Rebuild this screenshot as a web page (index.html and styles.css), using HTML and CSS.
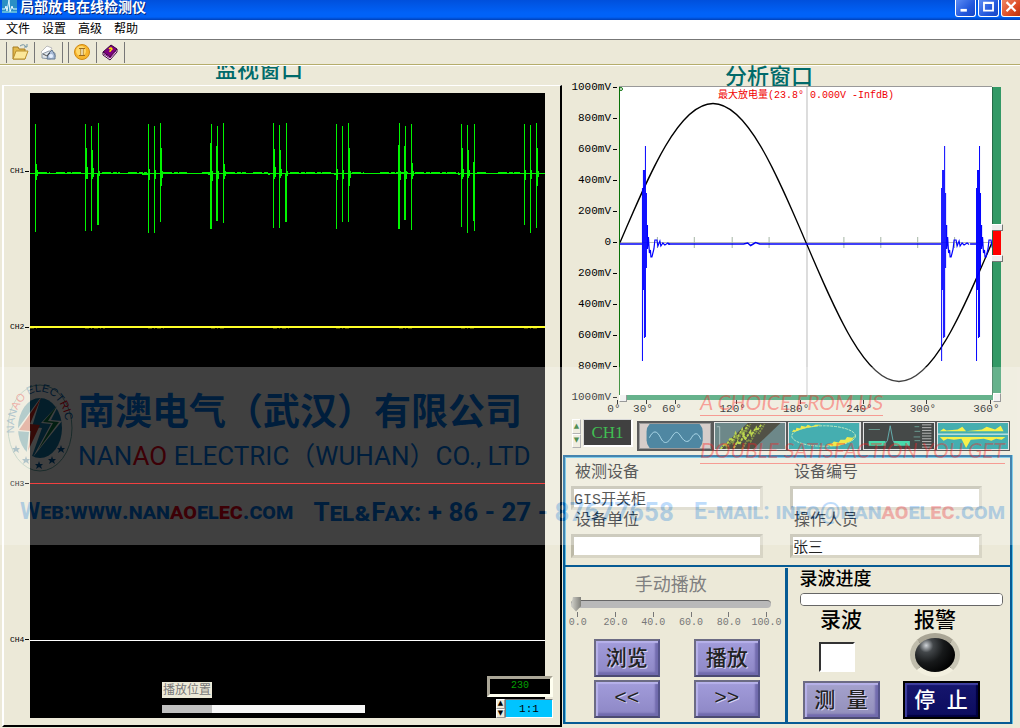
FILE: index.html
```html
<!DOCTYPE html>
<html lang="zh-CN">
<head>
<meta charset="utf-8">
<title>局部放电在线检测仪</title>
<link rel="stylesheet" href="styles.css">
</head>
<body>
<header class="titlebar">
  <svg class="app-icon" viewBox="0 0 15 13"><rect width="15" height="13" fill="#2b8fc4"/><path d="M0 9h3l1-3 1 5 2-11 1 12 2-6 1 3h4" fill="none" stroke="#e4f8ff"/><path d="M0 12h15" stroke="#8fe0f5"/></svg>
  <h1 class="app-title">局部放电在线检测仪</h1>
  <div class="window-buttons">
    <button class="win-btn" aria-label="最小化"><svg viewBox="0 0 21 17"><path d="M5 11h7" stroke="#fff" stroke-width="3"/></svg></button>
    <button class="win-btn" aria-label="最大化"><svg viewBox="0 0 21 17"><path d="M5.500 2.500h10v9h-10zM5 3h11" fill="none" stroke="#fff" stroke-width="2"/></svg></button>
    <button class="win-btn win-close" aria-label="关闭"><svg viewBox="0 0 21 17"><path d="M5 2l10 10M15 2L5 12" stroke="#fff" stroke-width="2.400"/></svg></button>
  </div>
</header>
<nav class="menubar">
  <button class="menu-item">文件</button>
  <button class="menu-item">设置</button>
  <button class="menu-item">高级</button>
  <button class="menu-item">帮助</button>
</nav>
<div class="toolbar">
  <button class="tool" aria-label="打开"><svg viewBox="0 0 20 20"><path d="M3 5h5l1 2h6v10H3z" fill="#e2b94c" stroke="#a77d23"/><path d="M3 17l3-8h12l-3 8z" fill="#fce79a" stroke="#b98e2d"/><path d="M10 4q4-3 6 1M14 5h3V2" fill="none" stroke="#6f93a3"/></svg></button>
  <button class="tool" aria-label="打印"><svg viewBox="0 0 20 20"><path d="M3 10l6-6 5 2-2 3-6 5z" fill="#fff" stroke="#bbb"/><path d="M4 12l7-3 6 2v4l-5 2-8-1z" fill="#dfe4e9" stroke="#8d99a6"/><path d="M9 17l1-5 4-4 3 5v4z" fill="#a9bbd6" stroke="#647891"/><path d="M5 12l4 2 3-3" fill="none" stroke="#555"/><circle cx="13" cy="14" r="2" fill="#e5efff"/></svg></button>
  <button class="tool tool-group" aria-label="暂停"><svg viewBox="0 0 20 20"><circle cx="10" cy="10" r="7.500" fill="#f7b52d" stroke="#d08a12"/><circle cx="9" cy="9" r="5" fill="#ffd96b"/><path d="M7 6.500h6M7 13.500h6M9 6v8M11 6v8" stroke="#9a6b1e"/><path d="M10 7v6" stroke="#fff"/></svg></button>
  <button class="tool" aria-label="帮助"><svg viewBox="0 0 20 20"><path d="M3 10l8-7 6 4-7 8z" fill="#800080" stroke="#3d003d"/><path d="M3 10l7 5 7-8v3l-7 8-7-5z" fill="#fff" stroke="#3d003d"/><path d="M4 12l6 4 6-7" fill="none" stroke="#800080"/><path d="M9 7q2-2 3 0l-2 2v1" fill="none" stroke="#ffe500" stroke-width="1.400"/></svg></button>
</div>

<main class="workspace">
  <section class="monitor">
    <div class="monitor-head"><h2 class="pane-title">监视窗口</h2></div>
    <div class="monitor-frame">
      <div class="channel-labels"><span>CH1</span><span>CH2</span><span>CH3</span><span>CH4</span></div>
      <div class="scope">
        <svg class="traces" viewBox="0 0 515 625" preserveAspectRatio="none">
          <g fill="none" stroke="#00f500">
            <path d="M0 80.500H515"/>
            <path d="M8 79.500h12M26 79.500h26M72 79.500h18M98 79.500h19M133 79.500h24M172 79.500h8M196 79.500h20M223 79.500h15M260 79.500h43M322 79.500h12M350 79.500h28M385 79.500h44M447 79.500h10M468 79.500h22M112 81.500h6M178 81.500h3M238 81.500h2M304 81.500h3M428 81.500h2" stroke-dasharray="9 2 4 1"/>
            <path d="M5.500 31V139M55.500 31V138M61.500 33V138M68.500 30V132M118.500 31V140M124.500 33V140M130.500 30V129M181.500 31V136M187.500 33V128M193.500 30V130M243.500 30V135M249.500 32V135M256.500 30V129M306.500 31V136M312.500 33V129M318.500 30V129M369.500 30V136M375.500 33V127M381.500 31V137M431.500 31V134M437.500 32V140M444.500 31V138M494.500 31V132M500.500 32V140M506.500 30V135"/>
            <path d="M6.500 71V87M56.500 55V86M62.500 57V86M67.500 80V132M119.500 76V87M125.500 77V86M131.500 55V93M180.500 50V136M186.500 53V128M194.500 71V86M244.500 56V86M250.500 57V85M255.500 80V129M307.500 76V87M313.500 77V86M319.500 55V93M368.500 52V136M374.500 53V127M382.500 70V86M432.500 55V86M438.500 57V85M443.500 69V128M495.500 77V87M501.500 77V86M507.500 55V93"/>
            <path d="M7.500 77V83M57.500 74V86M63.500 75V84M69.500 78V83M132.500 78V85M182.500 78V88M188.500 78V86M195.500 78V83M245.500 74V84M251.500 76V83M257.500 78V83M320.500 78V85M370.500 78V87M376.500 78V86M383.500 78V83M433.500 76V84M439.500 77V83M508.500 78V84"/>
          </g>
          <path d="M0 234h515" stroke="#ffff28" stroke-width="2"/>
          <path d="M0 235.500h8M55 235.500h20M118 235.500h16M181 235.500h13M243 235.500h16M306 235.500h15M369 235.500h14M431 235.500h15M494 235.500h15" stroke="#4b4b00" stroke-dasharray="4 2 1 2"/>
          <path d="M0 390.500h515" stroke="#f00000"/>
          <path d="M0 547.500h515" stroke="#fff"/>
        </svg>
        <div class="position">
          <label class="position-label" for="playpos">播放位置</label>
          <progress class="position-bar" id="playpos" value="50" max="203"></progress>
        </div>
        <div class="readouts">
          <output class="count">230</output>
          <div class="scale">
            <span class="spin"><button aria-label="增大">▲</button><button aria-label="减小">▼</button></span>
            <input class="scale-value" value="1:1" aria-label="比例">
          </div>
        </div>
      </div>
    </div>
  </section>

  <section class="analysis">
    <h2 class="pane-title">分析窗口</h2>
    <div class="chart">
      <div class="y-axis"><span>1000mV</span><span>800mV</span><span>600mV</span><span>400mV</span><span>200mV</span><span>0</span><span>200mV</span><span>400mV</span><span>600mV</span><span>800mV</span><span>1000mV</span></div>
      <div class="plot">
        <svg class="curves" viewBox="0 0 373 308" preserveAspectRatio="none">
          <defs>
            <g id="pulse" fill="none" stroke="#0000ff">
              <g class="crisp"><path d="M3.500 59V250M.500 101V274M1.500 83V203M2.500 83V251M4.500 106V181"/></g>
              <path d="M5.500 138V162L6.500 150L7.500 166L8.500 163L9 170H10L12 162L13 153H15L16 159L18 154L19 159L21 156L23 158L26 156L28 157.500" stroke-width="1.200"/>
            </g>
          </defs>
          <g class="crisp">
            <path d="M187.500 0V308M0 155.500H373" stroke="#bababa"/>
            <path d="M37.500 150v11M74.500 150v11M112.500 150v11M149.500 150v11M224.500 150v11M261.500 150v11M298.500 150v11M335.500 150v11" stroke="#a5b5a5"/>
          </g>
          <path d="M0 155.500C30.400 84.500 59.500 16.500 93.250 16.500S156.100 84.500 186.500 155.500S246 294.500 279.750 294.500S342.600 226.500 373 155.500" fill="none" stroke="#000" stroke-width="1.300"/>
          <path d="M0 157H22M48 157H124L128 156L131 158.500L136 155.500L140 157H322M351 157H357" fill="none" stroke="#0000f5" stroke-width="1.500"/>
          <use href="#pulse" x="22"/><use href="#pulse" x="322"/><use href="#pulse" x="357"/>
          <circle cx="1" cy="2" r="1.500" fill="none" stroke="#087008"/>
        </svg>
        <p class="peak-note">最大放电量(23.8° 0.000V -InfdB)</p>
      </div>
      <div class="v-range"><i class="grip"></i><i class="grip"></i></div>
      <div class="h-range"><i class="grip"></i><i class="grip"></i></div>
      <div class="x-axis"><span>0°</span><span>30°</span><span>60°</span><span>120°</span><span>180°</span><span>240°</span><span>300°</span><span>360°</span></div>
    </div>

    <div class="selector">
      <span class="ch-spin"><button aria-label="上一通道">▲</button><button aria-label="下一通道">▼</button></span>
      <input class="channel" value="CH1" aria-label="通道">
      <div class="views">
        <button class="view active" aria-label="波形"><svg viewBox="0 0 75 28" preserveAspectRatio="none"><rect width="75" height="28" fill="#c9bdb9"/><rect x="7" y="-5" width="60" height="38" rx="14" fill="#145f83"/><path d="M10 16c4-9 8-9 12 0s8 6 12-1 6-7 10 0 8 7 11 1 7-7 10 2" fill="none" stroke="#9bd4ea"/></svg></button>
        <button class="view" aria-label="三维"><svg viewBox="0 0 75 28" preserveAspectRatio="none"><rect width="75" height="28" fill="#3c6062"/><path d="M5 28L35 0H70L41 28z" fill="#171708"/><g fill="none"><path d="M6 28l5-6 1 2 5-8 2 4 3-9 2 5 5-9 1 5 5-10M20 27l4-7 2 3 5-10 1 5 6-9 1 4 5-8 1 3 5-7" stroke="#a5c914" stroke-width="2" stroke-dasharray="3 1"/><path d="M12 28l5-8 2 2 4-8 2 3 5-9 3 2 5-9M29 28l6-10 3 2 6-11 3 2 6-10" stroke="#5c730b" stroke-width="2" stroke-dasharray="2 1"/></g><path d="M2 4h3v20" fill="none" stroke="#91adad"/></svg></button>
        <button class="view" aria-label="椭圆"><svg viewBox="0 0 75 28" preserveAspectRatio="none"><rect width="75" height="28" fill="#079396"/><ellipse cx="37" cy="14" rx="34" ry="11" fill="none" stroke="#b4eab0" stroke-dasharray="3 1"/><path d="M3 10l2-3 2 1 1-3 4 1 1-3 5 1 2-2 5 2 3-2 6 0-6 2-8 1-7 2-5 2zM40 23l6-1 2-2 5 1 2-3 5 0 2-3 6 1 3-3-4 6-7 3-8 3-7 0z" fill="#e8e314"/></svg></button>
        <button class="view" aria-label="频谱"><svg viewBox="0 0 75 28" preserveAspectRatio="none"><rect width="75" height="28" fill="#070c0b"/><path d="M5 22h18M32 22h17" stroke="#0bd091" stroke-width="5"/><path d="M21 24l4-5 3-16 3 16 3 5" fill="none" stroke="#399"/><path d="M5 7h12M54 4h5M54 9h6M53 15h7M54 19h6" stroke="#397e70"/><path d="M62 2h10M62 5h10M62 8h10M62 11h10M62 14h10M62 17h10M62 20h10M62 23h10M62 26h10" stroke="#aaa"/></svg></button>
        <button class="view" aria-label="相位"><svg viewBox="0 0 75 28" preserveAspectRatio="none"><rect width="75" height="28" fill="#079396"/><path d="M2 9l4-3 3 2 12-1 5-3 4 5 17-2 5-3 9 3 6-4 3 6z" fill="#f4ec0f"/><path d="M2 15h70l-4 3-6-1-5 2-8-2-14 1-5 9-5-10-8 1-7-1-4 2z" fill="#f4ec0f"/><path d="M0 12h75" stroke="#fff"/></svg></button>
      </div>
    </div>

    <div class="panels">
      <form class="info">
        <div class="field"><label for="device">被测设备</label><input id="device" value="GIS开关柜"></div>
        <div class="field"><label for="number">设备编号</label><input id="number"></div>
        <div class="field"><label for="unit">设备单位</label><input id="unit"></div>
        <div class="field"><label for="operator">操作人员</label><input id="operator" value="张三"></div>
      </form>
      <div class="controls">
        <div class="playback">
          <label class="play-title" for="seek">手动播放</label>
          <input class="seek" id="seek" type="range" min="0" max="100" value="0">
          <div class="seek-scale"><span>0.0</span><span>20.0</span><span>40.0</span><span>60.0</span><span>80.0</span><span>100.0</span></div>
          <div class="play-buttons">
            <button class="key">浏览</button><button class="key">播放</button>
            <button class="key key-mono">&lt;&lt;</button><button class="key key-mono">&gt;&gt;</button>
          </div>
        </div>
        <div class="record">
          <label class="record-title" for="recprog">录波进度</label>
          <progress class="record-bar" id="recprog" value="0" max="100"></progress>
          <div class="record-grid">
            <label class="status-label" for="rec">录波</label><span class="status-label alarm">报警</span>
            <input class="rec-box" id="rec" type="checkbox"><span class="led alarm"></span>
            <button class="key key-measure">测&nbsp;&nbsp;量</button><button class="key key-stop">停&nbsp;&nbsp;止</button>
          </div>
        </div>
      </div>
    </div>
  </section>
</main>

<div class="watermark">
  <div class="brand">
    <svg class="logo" viewBox="0 0 66 88">
      <defs><path id="ring" d="M9 57A26 36 0 1 1 58 54"/></defs>
      <ellipse cx="33" cy="44" rx="32" ry="43" fill="#fff" stroke="#6aa" stroke-width="1"/>
      <ellipse cx="33" cy="44" rx="22" ry="30" fill="#1277a8"/>
      <path d="M34 13L9 47l13 1-3 26 5 1 11-31-10-1z" fill="#fff"/>
      <path d="M34 14L12 46l12 1-3 20 12-26-10-1z" fill="#d12b20"/>
      <path d="M52 20L34 39l10 1-18 33 29-36-11-1z" fill="#fff"/>
      <path d="M50 22L36 38l10 1-15 27 21-28-11-1z" fill="#087a43"/>
      <text class="logo-text"><textPath href="#ring" startOffset="8">NAN<tspan class="red">AO</tspan> ELECT<tspan class="red">RI</tspan>C</textPath></text>
      <g fill="#075b9f"><path id="star" d="M9 61l1 3h3l-2 2 1 3-3-2-3 2 1-3-2-2h3z"/><use href="#star" x="10" y="11"/><use href="#star" x="23" y="16"/><use href="#star" x="36" y="11"/><use href="#star" x="45"/></g>
    </svg>
    <div class="company"><p class="company-cn">南澳电气（武汉）有限公司</p><p class="company-en">NAN<span class="red">AO</span> ELECTRIC（WUHAN）CO., LTD</p></div>
  </div>
  <div class="contact">
    <span>Web:www.nan<span class="red">ao</span>el<span class="red">ec</span>.com</span>
    <span class="phone">Tel&amp;Fax: + 86 - 27 - 87677658</span>
    <span>E-mail: info@nan<span class="red">ao</span>el<span class="red">ec</span>.com</span>
  </div>
</div>
<div class="slogans"><p>A CHOICE FROM US</p><p>DOUBLE SATISFACTION YOU GET</p></div>
</body>
</html>
```
FILE: styles.css
```css
* { box-sizing: border-box; }
:root {
  --face: #ece9d8;
  --teal: #006a6a;
  --edge: #075b94;
  --edge-light: #5bbde2;
  --mono: "Liberation Mono", "Noto Sans CJK SC", monospace;
}
body {
  margin: 0;
  min-height: 100vh;
  display: flex;
  flex-direction: column;
  position: relative;
  overflow-x: hidden;
  background: var(--face);
  color: #000;
  font: 12px/16px "Liberation Sans", "Noto Sans CJK SC", sans-serif;
}
h1, h2, p { margin: 0; font-weight: normal; }
button, input { font: inherit; color: inherit; padding: 0; margin: 0; border-radius: 0; }
button { border: 0; background: none; }
svg { display: block; }

/* Title bar, menu and toolbar */
.titlebar {
  display: flex;
  align-items: flex-start;
  gap: 3px;
  height: 20px;
  padding-left: 2px;
  overflow: hidden;
  background: linear-gradient(#0050dc, #0062f8 65%, #0062f8 85%, #0040b8);
}
.app-icon { width: 15px; height: 13px; }
.app-title { font-size: 14px; line-height: 15px; font-weight: bold; color: #fff; text-shadow: 1px 1px #06267b; }
.window-buttons { display: flex; gap: 2px; margin-left: auto; margin-right: -2px; }
.win-btn {
  width: 21px;
  height: 17px;
  border: 1px solid #fff;
  border-top: 0;
  border-radius: 0 0 3px 3px;
  background: linear-gradient(135deg, #5c8cf4, #2257dc 60%, #1846c4);
}
.win-btn svg { width: 100%; height: 100%; }
.win-close { background: linear-gradient(135deg, #ef8664, #dc4a22 60%, #b92f0c); }
.menubar {
  display: flex;
  gap: 12px;
  height: 20px;
  padding: 0 6px;
  background: #fff;
  border-bottom: 1px solid #777;
}
.menu-item { line-height: 17px; }
.toolbar {
  display: flex;
  align-items: center;
  height: 25px;
  padding-left: 6px;
  border-bottom: 1px solid #b5ad6b;
}
.tool { height: 21px; width: 28px; padding: 0 3px; border-left: 1px solid #777; }
.tool:last-child { width: 29px; border-right: 1px solid #777; }
.tool-group { margin-left: 6px; box-shadow: -5px 0 var(--face), -6px 0 #777; }
.tool svg { width: 20px; height: 20px; }

.workspace { flex: 1; display: grid; grid-template-columns: 562fr 458fr; border-top: 1px solid #fff; }
.pane-title { font-size: 22px; line-height: 20px; text-align: center; color: var(--teal); font-weight: 500; }

/* Monitor pane */
.monitor { min-width: 0; display: flex; flex-direction: column; padding-bottom: 1px; }
.monitor-head { height: 19px; overflow: hidden; padding-right: 44px; }
.monitor-head .pane-title { line-height: 8px; }
.monitor-frame {
  flex: 1;
  display: flex;
  margin-left: 2px;
  padding: 7px 15px 7px 5px;
  border: 1px solid #fff;
  border-left-width: 2px;
  border-right: 2px solid #000;
  border-bottom: 2px solid #000;
}
.channel-labels { display: grid; grid-template-rows: repeat(4, 1fr); align-items: center; width: 21px; font: 8px/10px var(--mono); }
.channel-labels span { display: flex; align-items: center; justify-content: space-between; padding: 0 1px; }
.channel-labels span::after { content: ""; width: 4px; border-top: 1px solid #000; }
.scope { flex: 1; position: relative; background: #000; }
.traces { position: absolute; width: 100%; height: 100%; shape-rendering: crispEdges; }
.position { position: absolute; left: 132px; bottom: 5px; display: flex; flex-direction: column; align-items: flex-start; gap: 7px; }
.position-label { background: var(--face); color: #777; padding: 0 1px; }
.position-bar { appearance: none; display: block; width: 203px; height: 8px; border: 0; }
.position-bar::-webkit-progress-bar { background: #f7f7f7; }
.position-bar::-webkit-progress-value { background: #c0c0c0; }
.readouts { position: absolute; right: -8px; bottom: 0; display: flex; flex-direction: column; align-items: flex-end; gap: 2px; }
.count {
  width: 66px;
  height: 21px;
  border: 3px solid;
  border-color: #aaa697 #fffff0 #fffff0 #aaa697;
  background: #000;
  color: #00a000;
  text-align: center;
  font: 10px/14px var(--mono);
}
.scale { display: flex; height: 19px; }
.spin, .ch-spin { display: flex; flex-direction: column; width: 9px; }
.spin button, .ch-spin button {
  flex: 1;
  min-height: 0;
  overflow: hidden;
  background: var(--face);
  border: 1px solid;
  border-color: #fff #999 #999 #fff;
  font: 7px/7px "DejaVu Sans", sans-serif;
}
.scale-value { width: 48px; border: 1px solid #777; border-right-color: #fff; border-bottom-color: #fff; background: #00c4ff; text-align: center; font: 11px/16px var(--mono); }

/* Analysis pane */
.analysis { min-width: 0; display: flex; flex-direction: column; padding: 0 8px 4px 1px; }
.analysis > .pane-title { line-height: 21px; padding-right: 37px; }
.chart { flex: 1; display: grid; grid-template-columns: 56px 1fr 9px; grid-template-rows: 1fr 5px 19px; padding-right: 11px; }
.y-axis {
  grid-row: 1 / 3;
  display: flex;
  flex-direction: column;
  justify-content: space-between;
  margin: -6px 2px -3px 0;
  font: 11px/12px var(--mono);
}
.y-axis span { display: flex; align-items: center; justify-content: flex-end; gap: 2px; }
.y-axis span::after { content: ""; width: 4px; border-top: 1px solid #000; }
.plot { position: relative; background: #fff; border-left: 1px solid #087008; box-shadow: 0 -1px #999; }
.curves { position: absolute; width: 100%; height: 100%; }
.crisp { shape-rendering: crispEdges; }
.peak-note { position: relative; text-align: center; color: #f00000; font: 10px/18px var(--mono); }
.v-range {
  display: flex;
  flex-direction: column;
  justify-content: space-between;
  align-items: center;
  padding: 137px 0 133px;
  background: linear-gradient(#f00 0 0) 0 51% / 100% 28px no-repeat #339966;
  border-left: 1px solid #256b47;
}
.grip { flex: none; background: #eee; border: 1px solid; border-color: #fff #777 #777 #fff; }
.v-range .grip { width: 12px; height: 7px; }
.h-range { grid-column: 2 / 4; display: flex; align-items: center; justify-content: space-between; background: #339966; }
.h-range .grip { width: 8px; height: 9px; }
.x-axis {
  grid-column: 2;
  display: grid;
  grid-template-columns: repeat(13, 1fr);
  width: 108.333%;
  margin-left: -4.167%;
  font: 11px/10px var(--mono);
}
.x-axis span { display: flex; flex-direction: column; align-items: center; padding-right: 8px; }
.x-axis span::before { content: ""; height: 4px; border-left: 1px solid #000; margin-right: -8px; }
.x-axis span:nth-child(4) { grid-column-start: 5; }
.x-axis span:nth-child(5) { grid-column-start: 7; }
.x-axis span:nth-child(6) { grid-column-start: 9; }
.x-axis span:nth-child(7) { grid-column-start: 11; }
.x-axis span:nth-child(8) { grid-column-start: 13; }

.selector { display: flex; gap: 2px; height: 32px; padding: 0 2px 0 9px; margin-bottom: 4px; }
.ch-spin { height: 29px; }
.ch-spin button { color: #176b17; }
.channel {
  width: 50px;
  height: 28px;
  border: 1px solid #ccc;
  border-right: 2px solid #fff;
  border-bottom: 2px solid #fff;
  background: #000;
  color: #00a818;
  text-align: center;
  font: 17px/24px "Liberation Serif", serif;
}
.views { flex: 1; display: flex; margin: 2px 0 0 2px; }
.view { flex: 1; min-width: 0; border: 1px solid #222; padding: 1px; background: #ddd; }
.view.active { border-width: 2px; background: #777; }
.view svg { width: 100%; height: 100%; }

.panels { border: 2px solid var(--edge); box-shadow: inset 1px 1px var(--edge-light), 1px 0 var(--edge-light); }
.info {
  display: grid;
  grid-template-columns: repeat(2, minmax(0, 192px));
  gap: 2px 27px;
  padding: 7px 6px 7px 6px;
  border-bottom: 2px solid var(--edge);
}
.field { display: flex; flex-direction: column; gap: 4px; font: 16px/18px "Liberation Mono", "Noto Sans CJK SC", monospace; color: #222; }
.field label { padding-left: 4px; }
.field input {
  width: 100%;
  height: 24px;
  border: 3px solid;
  border-color: #bdbaa8 #d8d5c5 #d8d5c5 #bdbaa8;
  background: #fff;
  font-size: 15px;
}
.controls { display: grid; grid-template-columns: 1fr 1fr; }
.playback { min-width: 0; padding: 7px 14px 3px 6px; margin-top: 1px; border-right: 3px solid var(--edge); }
.play-title { display: block; text-align: center; color: #808080; font-size: 18px; line-height: 20px; }
.seek { appearance: none; display: block; width: 100%; height: 17px; background: none; }
.seek::-webkit-slider-runnable-track { height: 8px; border-top: 1px solid #666; border-radius: 4px; background: #b9b9b9; }
.seek::-webkit-slider-thumb {
  appearance: none;
  width: 10px;
  height: 15px;
  margin-top: -4px;
  background: linear-gradient(90deg, #d4d4cc, #80807a);
  clip-path: polygon(20% 0, 100% 0, 100% 65%, 50% 100%, 0 65%);
}
.seek-scale { display: grid; grid-template-columns: repeat(6, 1fr); margin: 0 -15px 0 -12px; font: 10px/11px var(--mono); color: #777; }
.seek-scale span { display: flex; flex-direction: column; align-items: center; }
.seek-scale span::before { content: ""; height: 5px; border-left: 1px solid #777; }
.play-buttons { display: grid; grid-template-columns: 66px 66px; gap: 3px 34px; justify-content: center; margin: 11px 0 0 12px; }
.key {
  height: 38px;
  border: 2px solid;
  border-color: #6c6b84 #55548a #4c4b72 #6c6b84;
  background: linear-gradient(#a29cdb, #8d87c5);
  box-shadow: inset 2px 2px 1px #b7b2ea, inset -3px -3px 2px #716bad;
  font-size: 21px;
  line-height: 30px;
  font-weight: 500;
  color: #222;
  text-shadow: 1px 1px #d5d2f2;
}
.key-mono { font-family: var(--mono); }
.record { min-width: 0; padding: 2px 7px 3px 12px; }
.record-title { display: block; font-size: 18px; line-height: 20px; font-weight: 500; }
.record-bar { appearance: none; display: block; width: 100%; height: 13px; margin-top: 4px; border: 1px solid #666; border-radius: 4px; overflow: hidden; }
.record-bar::-webkit-progress-bar { background: #fff; }
.record-grid { display: grid; grid-template-columns: 77px 77px; column-gap: 23px; padding-left: 3px; margin-top: 1px; align-items: center; justify-items: center; }
.record-grid .key { width: 100%; }
.status-label { font-size: 21px; line-height: 26px; font-weight: 500; }
.alarm { margin-right: 12px; }
.rec-box { appearance: none; width: 36px; height: 30px; margin-right: 9px; background: #fff; border: 2px solid; border-color: #333 #fff #fff #333; }
.led {
  width: 50px;
  height: 44px;
  margin-bottom: 4px;
  border: 5px solid;
  border-color: #a9a595 #c9c6b5 #f3f0df #c0bdac;
  border-radius: 50%;
  background: radial-gradient(circle at 28% 22%, #d0d4d8 0, #43474a 18%, #17191a 45%, #000 80%);
}
.key-measure { background: linear-gradient(#a5a2cd, #928fbb); }
.key-stop { border-color: #000; background: linear-gradient(#16166e, #0c0c5e); color: #fff; box-shadow: inset 2px 2px 1px #4040a0, inset -2px -2px 1px #000040; text-shadow: none; }

/* Translucent overlay with company details */
.watermark {
  position: absolute;
  inset: 367px 0 auto 0;
  height: 178px;
  overflow: hidden;
  opacity: .25;
  pointer-events: none;
  background: #fff;
  color: #0078f0;
  font-family: Roboto, "Noto Sans CJK SC", sans-serif;
  white-space: nowrap;
}
.red { color: #f00018; fill: #f00018; }
.brand { display: flex; align-items: flex-start; gap: 5px; padding: 17px 0 0 7px; }
.logo { width: 66px; height: 88px; flex: none; overflow: visible; }
.logo-text { font: 11px "Liberation Sans", sans-serif; fill: #0060b0; }
.company-cn { font-size: 37px; line-height: 54px; font-weight: bold; margin-top: 2px; }
.company-en { font-size: 26px; line-height: 32px; }
.contact { display: flex; justify-content: space-between; margin-top: 22px; padding: 0 15px 0 20px; font-size: 23px; line-height: 36px; font-weight: bold; font-variant: small-caps; }
.phone { font-size: 26px; }
.slogans {
  position: absolute;
  left: 700px;
  top: 388px;
  pointer-events: none;
  color: rgba(255, 30, 30, .4);
  font: italic 21px/27px Lato, sans-serif;
  display: grid;
  justify-items: start;
  gap: 20px;
  white-space: nowrap;
}
.slogans p { border-bottom: 1px solid; }
```
